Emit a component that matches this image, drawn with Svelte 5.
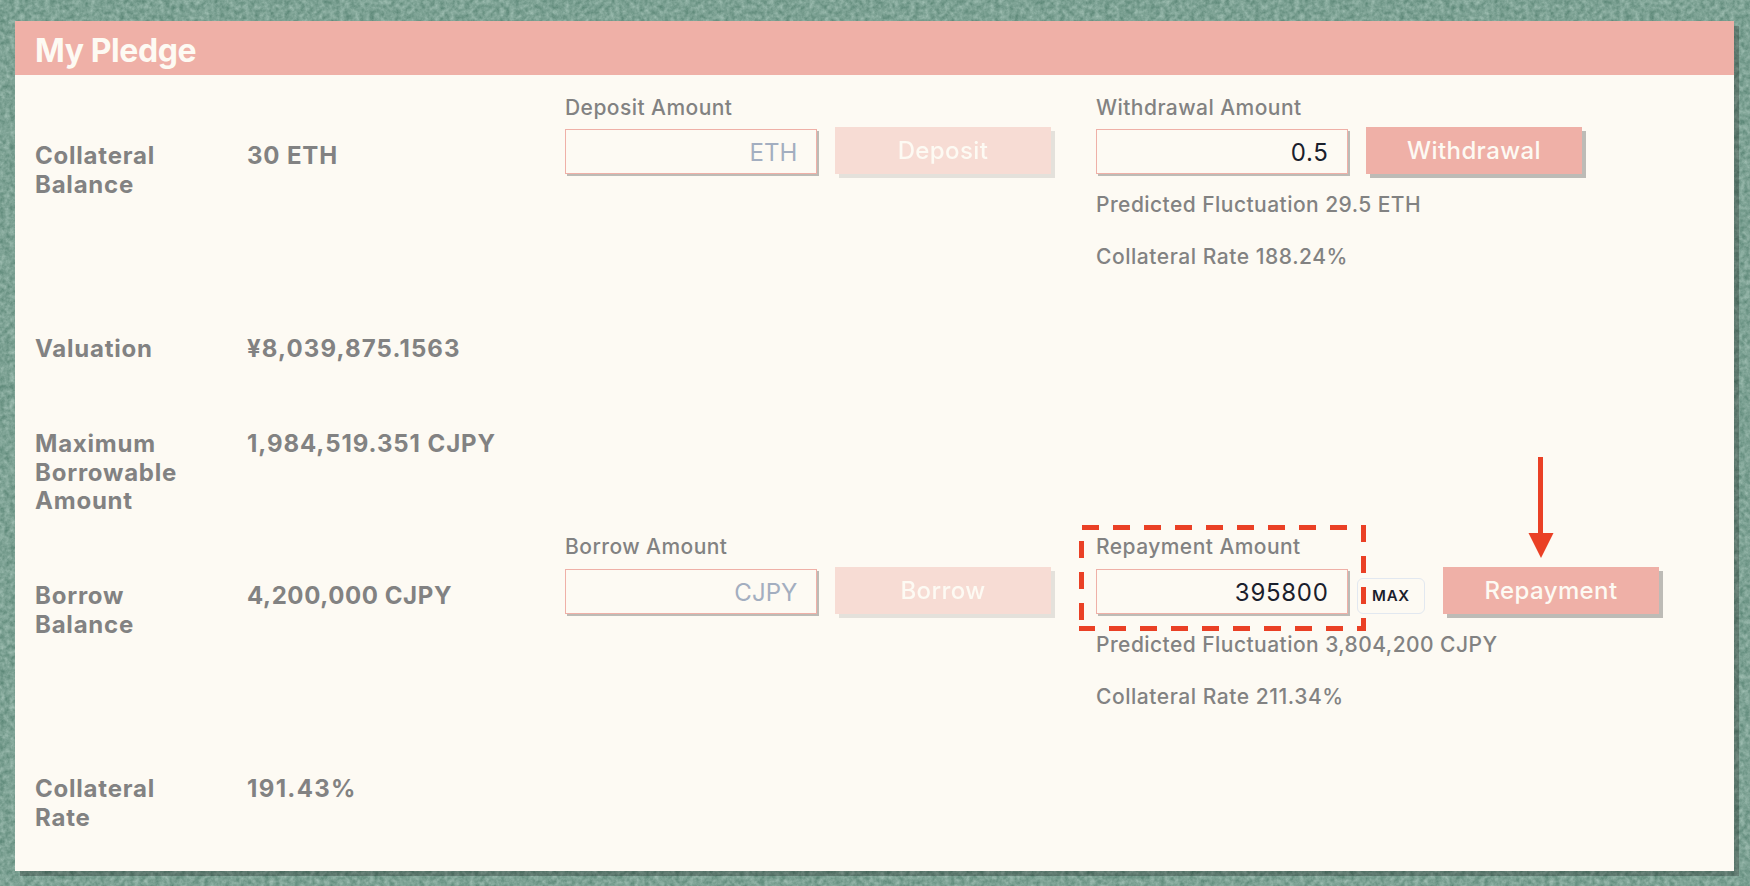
<script>
  const rows = [
    {
      label: ['Collateral', 'Balance'],
      value: '30 ETH',
      tracking: 0.85,
      forms: [
        { title: 'Deposit Amount', placeholder: 'ETH', value: '', action: 'Deposit', disabled: true },
        {
          title: 'Withdrawal Amount', placeholder: 'ETH', value: '0.5', action: 'Withdrawal',
          notes: ['Predicted Fluctuation 29.5 ETH', 'Collateral Rate 188.24%']
        }
      ]
    },
    { label: ['Valuation'], value: '¥8,039,875.1563', tracking: 1.13 },
    { label: ['Maximum', 'Borrowable', 'Amount'], value: '1,984,519.351 CJPY', tracking: 0.93 },
    {
      label: ['Borrow', 'Balance'],
      value: '4,200,000 CJPY',
      tracking: 0.6,
      forms: [
        { title: 'Borrow Amount', placeholder: 'CJPY', value: '', action: 'Borrow', disabled: true },
        {
          title: 'Repayment Amount', placeholder: 'CJPY', value: '395800', action: 'Repayment', max: true,
          notes: ['Predicted Fluctuation 3,804,200 CJPY', 'Collateral Rate 211.34%']
        }
      ]
    },
    { label: ['Collateral', 'Rate'], value: '191.43%', tracking: 1.35 }
  ];
</script>

<div class="page">
  <svg class="texture" width="1750" height="886" aria-hidden="true">
    <filter id="grain" x="0" y="0" width="100%" height="100%" color-interpolation-filters="sRGB">
      <feTurbulence type="fractalNoise" baseFrequency="0.2" numOctaves="3" seed="4" />
      <feColorMatrix values="0.34 0 0 0 0.32  0.28 0 0 0 0.495  0.3 0 0 0 0.43  0 0 0 0 1" />
    </filter>
    <rect width="1750" height="886" filter="url(#grain)" />
  </svg>

  <section class="card">
    <h1>My Pledge</h1>
    <div class="rows">
      {#each rows as row}
        <div class="row" class:tall={row.forms}>
          <div class="name">{#each row.label as line}<span>{line}</span>{/each}</div>
          <div class="amount" style="letter-spacing: {row.tracking}px">{row.value}</div>
          {#each row.forms ?? [] as form}
            <div class="form">
              <div class="title">{form.title}</div>
              <div class="controls">
                <input type="text" placeholder={form.placeholder} value={form.value} aria-label={form.title} />
                {#if form.max}<button class="max">MAX</button>{/if}
                <button class="action" disabled={form.disabled}>{form.action}</button>
              </div>
              {#each form.notes ?? [] as note}<p>{note}</p>{/each}
            </div>
          {/each}
        </div>
      {/each}
    </div>
  </section>

  <svg class="marks" width="1750" height="886" aria-hidden="true">
    <g fill="none" stroke="#ea4025" stroke-width="5">
      <path d="M1082 527.5H1363.5V628.5H1079" stroke-dasharray="17 14" />
      <path d="M1081.5 620V528" stroke-dasharray="17 14" />
      <path d="M1540.5 457V536" />
    </g>
    <path d="M1528.5 533H1553.5L1541 558Z" fill="#ea4025" />
  </svg>
</div>

<style>
  :global(body) { margin: 0; overflow: hidden; }
  .page {
    position: relative;
    box-sizing: border-box;
    width: 1750px;
    height: 886px;
    padding: 21px 16px 15px 15px;
    background: #7ba594;
    font-family: Inter, "Liberation Sans", sans-serif;
    color: #828282;
    overflow: hidden;
  }
  .texture, .marks { position: absolute; left: 0; top: 0; pointer-events: none; }
  .card {
    position: relative;
    height: 850px;
    background: #fdfaf3;
    box-shadow: 5px 5px 0 rgba(0, 0, 0, 0.25);
  }
  h1 {
    box-sizing: border-box;
    margin: 0;
    height: 54px;
    padding: 10px 20px 0;
    background: #efb0a7;
    color: #fdfaf3;
    font-size: 32px;
    line-height: 39px;
    font-weight: 700;
    letter-spacing: -0.42px;
  }
  .rows { display: grid; grid-template-rows: 244px 95px 101px 244px 96px; padding: 15px 0 0 20px; }
  .row { display: grid; grid-template-columns: 212px 318px 531px 1fr; align-items: start; }
  .name, .amount { padding-top: 1px; font-size: 24px; line-height: 28.6px; font-weight: 700; letter-spacing: 0.78px; white-space: nowrap; }
  .name span { display: block; }
  .tall .name, .tall .amount { padding-top: 52px; }
  .title, p { font-size: 21px; line-height: 26px; font-weight: 500; letter-spacing: 0.45px; white-space: nowrap; }
  .title { padding: 5px 0 0; }
  .tall ~ .tall .title { padding-top: 4px; margin-bottom: 7px; }
  .controls { display: flex; align-items: flex-start; height: 47px; margin-top: 6px; }
  input {
    box-sizing: border-box;
    width: 252px;
    height: 45px;
    margin: 2px 0 0;
    padding: 1px 18.5px 0 16px;
    border: 1px solid #efb0a7;
    border-radius: 0;
    outline: 0;
    background: #fdfaf3;
    box-shadow: 2px 2px 0 rgba(0, 0, 0, 0.25);
    font: 400 24px/40px Inter, "Liberation Sans", sans-serif;
    letter-spacing: 0.7px;
    color: #1a202c;
    text-align: right;
  }
  input::placeholder { color: #a3aec0; opacity: 1; letter-spacing: 0.1px; }
  button { box-sizing: border-box; margin: 0; font-family: inherit; }
  .action {
    width: 216px;
    height: 47px;
    margin-left: 18px;
    padding: 0;
    border: 0;
    background: #efb0a7;
    box-shadow: 4px 4px 0 rgba(0, 0, 0, 0.25);
    color: #fdfaf3;
    font-size: 24px;
    font-weight: 500;
    letter-spacing: 0.4px;
  }
  .action:disabled { opacity: 0.4; }
  .max {
    width: 68px;
    height: 36px;
    margin: 11px 0 0 9px;
    padding: 0 0 1px;
    border: 1px solid #e2e8f0;
    border-radius: 6px;
    background: transparent;
    color: #1a202c;
    font-size: 15px;
    font-weight: 600;
    letter-spacing: 0.8px;
  }
  .max + .action { margin-left: 18px; }
  p { margin: 18px 0 26px; }
  p + p { margin-top: 0; letter-spacing: 0.55px; }
</style>
